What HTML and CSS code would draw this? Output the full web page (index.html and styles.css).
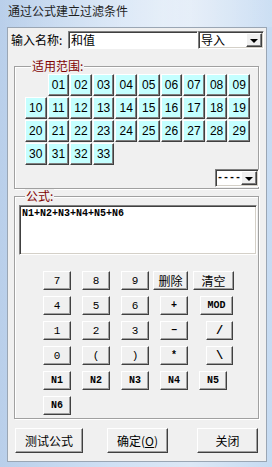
FILE: index.html
```html
<!DOCTYPE html>
<html>
<head>
<meta charset="utf-8">
<link rel="stylesheet" href="styles.css">
</head>
<body>
<div class="window">
  <div class="titlebar">通过公式建立过滤条件</div>
  <div class="client">
    <div class="name-row">
      <span class="name-label">输入名称:</span>
      <div class="textbox">和值</div>
      <div class="combo combo-import"><span class="combo-text">导入</span><span class="combo-btn"><span class="arrow"></span></span></div>
    </div>

    <fieldset class="group group-range">
      <legend>适用范围:</legend>
      <div class="num-grid">
        <span class="cell c-skip">01</span><span class="cell">02</span><span class="cell">03</span><span class="cell">04</span><span class="cell">05</span><span class="cell">06</span><span class="cell">07</span><span class="cell">08</span><span class="cell">09</span>
        <span class="cell">10</span><span class="cell">11</span><span class="cell">12</span><span class="cell">13</span><span class="cell">14</span><span class="cell">15</span><span class="cell">16</span><span class="cell">17</span><span class="cell">18</span><span class="cell">19</span>
        <span class="cell">20</span><span class="cell">21</span><span class="cell">22</span><span class="cell">23</span><span class="cell">24</span><span class="cell">25</span><span class="cell">26</span><span class="cell">27</span><span class="cell">28</span><span class="cell">29</span>
        <span class="cell">30</span><span class="cell">31</span><span class="cell">32</span><span class="cell">33</span>
      </div>
      <div class="range-foot">
        <div class="combo combo-dash"><span class="combo-text dash">----</span><span class="combo-btn"><span class="arrow"></span></span></div>
      </div>
    </fieldset>

    <fieldset class="group group-formula">
      <legend>公式:</legend>
      <div class="formula-box">N1+N2+N3+N4+N5+N6</div>
      <div class="keypad">
        <div class="krow">
          <span class="key">7</span><span class="key">8</span><span class="key">9</span><span class="key cjk k-del">删除</span><span class="key cjk k-clr">清空</span>
        </div>
        <div class="krow">
          <span class="key">4</span><span class="key">5</span><span class="key">6</span><span class="key bold">+</span><span class="key bold k-mod">MOD</span>
        </div>
        <div class="krow">
          <span class="key">1</span><span class="key">2</span><span class="key">3</span><span class="key bold">−</span><span class="key bold k-slash">/</span>
        </div>
        <div class="krow">
          <span class="key">0</span><span class="key">(</span><span class="key">)</span><span class="key bold">*</span><span class="key bold k-slash">\</span>
        </div>
        <div class="krow">
          <span class="key bold">N1</span><span class="key bold">N2</span><span class="key bold">N3</span><span class="key bold">N4</span><span class="key bold">N5</span>
        </div>
        <div class="krow">
          <span class="key bold">N6</span>
        </div>
      </div>
    </fieldset>

    <div class="actions">
      <span class="btn btn-test">测试公式</span>
      <span class="btn btn-ok">确定(<u>O</u>)</span>
      <span class="btn btn-close">关闭</span>
    </div>
  </div>
</div>
</body>
</html>
```

FILE: styles.css
```css
html, body {
  margin: 0;
  padding: 0;
}
body {
  width: 272px;
  height: 467px;
  overflow: hidden;
  font-family: "Noto Sans CJK SC", "Liberation Sans", sans-serif;
  font-size: 12px;
  color: #000;
}
.window {
  width: 272px;
  height: 467px;
  box-sizing: border-box;
  background: linear-gradient(to right, #b9cfea 0%, #cfe0f4 40%, #dce8f6 70%, #c6dbf2 100%);
}
.titlebar {
  height: 27px;
  line-height: 21px;
  padding-left: 8px;
  color: #1e1e1e;
  font-size: 12px;
  white-space: nowrap;
  background: linear-gradient(to right, rgba(255,255,255,0) 0%, rgba(255,255,255,0.35) 60%, rgba(255,255,255,0.1) 100%);
}
.client {
  margin-left: 7px;
  width: 260px;
  height: 435px;
  box-sizing: border-box;
  border: 1px solid #9aa6b4;
  background: #f0f0f0;
  display: flex;
  flex-direction: column;
}
.name-row {
  display: flex;
  align-items: center;
  height: 18px;
  margin-top: 3px;
  padding-left: 3px;
}
.name-label {
  width: 57px;
  line-height: 18px;
  white-space: nowrap;
}
.textbox {
  width: 130px;
  height: 18px;
  box-sizing: border-box;
  background: #fff;
  border: 1px solid;
  border-color: #808080 #fff #fff #808080;
  box-shadow: inset 1px 1px 0 #404040;
  padding-left: 2px;
  line-height: 15px;
}
.combo {
  height: 18px;
  box-sizing: border-box;
  background: #fff;
  border: 1px solid;
  border-color: #808080 #fff #fff #808080;
  box-shadow: inset 1px 1px 0 #404040, inset -1px -1px 0 #d4d0c8;
  display: flex;
  padding: 1px;
}
.combo-import {
  width: 66px;
}
.combo-text {
  flex: 1;
  min-width: 0;
  line-height: 14px;
  padding-left: 1px;
  white-space: nowrap;
}
.combo-text.dash {
  font-family: "Liberation Mono", monospace;
  font-size: 10px;
  font-weight: bold;
  padding-left: 0;
}
.combo-btn {
  width: 16px;
  flex: none;
  box-sizing: border-box;
  background: #f0f0f0;
  border: 1px solid;
  border-color: #fff #404040 #404040 #fff;
  box-shadow: inset -1px -1px 0 #808080;
  display: flex;
  align-items: center;
  justify-content: center;
}
.arrow {
  width: 0;
  height: 0;
  border-left: 4px solid transparent;
  border-right: 4px solid transparent;
  border-top: 4px solid #000;
  margin-top: 1px;
}
.group {
  margin: 0 0 0 6px;
  width: 245px;
  box-sizing: border-box;
  border: 1px solid #a0a0a0;
  box-shadow: inset 1px 1px 0 #fff, 1px 1px 0 #fff;
  padding: 1px 0 0 10px;
  min-width: 0;
}
.group legend {
  color: #800000;
  font-size: 12px;
  line-height: 14px;
  padding: 0 1px;
  margin-left: 6px;
  background: #f0f0f0;
}
.group-range {
  margin-top: 10px;
  height: 130px;
}
.num-grid {
  width: 225px;
  display: grid;
  grid-template-columns: repeat(10, 1fr);
  grid-auto-rows: 22px;
  gap: 1px;
}
.c-skip {
  grid-column-start: 2;
}
.cell {
  box-sizing: border-box;
  background: #c4ffff;
  border: 1px solid;
  border-color: #fff #404040 #404040 #fff;
  box-shadow: inset -1px -1px 0 #808080;
  font-family: "Liberation Sans", sans-serif;
  font-size: 12px;
  display: flex;
  align-items: center;
  justify-content: center;
  padding-bottom: 1px;
}
.range-foot {
  display: flex;
  justify-content: flex-end;
  margin-top: 4px;
}
.combo-dash {
  width: 44px;
  margin-right: -1px;
}
.group-formula {
  height: 230px;
  padding: 2px 0 0 4px;
}
.formula-box {
  width: 238px;
  height: 50px;
  box-sizing: border-box;
  background: #fff;
  border: 1px solid;
  border-color: #808080 #fff #fff #808080;
  box-shadow: inset 1px 1px 0 #404040, inset -1px -1px 0 #d4d0c8;
  font-family: "Liberation Mono", monospace;
  font-weight: bold;
  font-size: 10px;
  line-height: 12px;
  padding: 2px 0 0 2px;
}
.keypad {
  display: flex;
  flex-direction: column;
  gap: 6px;
  margin-top: 16px;
  padding-left: 24px;
}
.krow {
  display: flex;
  gap: 11px;
  height: 19px;
}
.key {
  width: 28px;
  height: 19px;
  box-sizing: border-box;
  background: #f0f0f0;
  border: 1px solid;
  border-color: #fff #404040 #404040 #fff;
  box-shadow: inset -1px -1px 0 #a0a0a0;
  font-family: "Liberation Mono", monospace;
  font-size: 11px;
  display: flex;
  align-items: center;
  justify-content: center;
}
.key.bold {
  font-weight: bold;
  font-size: 10px;
}
.key.cjk {
  font-family: "Noto Sans CJK SC", sans-serif;
  font-size: 12px;
}
.k-del {
  width: 35px;
  margin-left: -7px;
}
.k-clr {
  width: 41px;
  margin-left: -6px;
}
.k-mod {
  width: 33px;
  margin-left: 1px;
}
.key.k-slash {
  width: 27px;
  margin-left: 7px;
  font-size: 12px;
}
.actions {
  display: flex;
  margin-top: 9px;
  padding-left: 7px;
}
.btn {
  height: 25px;
  box-sizing: border-box;
  background: #f0f0f0;
  border: 1px solid;
  border-color: #fff #404040 #404040 #fff;
  box-shadow: inset -1px -1px 0 #a0a0a0;
  font-size: 12px;
  display: flex;
  align-items: center;
  justify-content: center;
}
.btn-test {
  width: 68px;
}
.btn-ok {
  width: 61px;
  margin-left: 24px;
}
.btn-close {
  width: 61px;
  margin-left: 29px;
}
```
